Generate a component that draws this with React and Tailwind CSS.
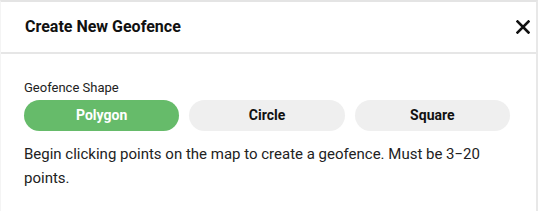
import React, { useState } from "react";

const shapes = ["Polygon", "Circle", "Square"];

export default function App() {
  const [shape, setShape] = useState("Polygon");

  return (
    <div className="w-[540px] h-[211px] bg-white font-['Roboto',sans-serif] text-[#1f1f1f]">
      <div className="w-[538px] h-full border-t-[2px] border-t-[#e4e4e4] border-r-[2px] border-r-[#e8e8e8] border-l border-l-[#f4f4f4]">
        <div className="h-[52px] flex items-center justify-between pl-6 pr-[1px] border-b-[2px] border-[#e6e6e6]">
          <span className="text-[16px] font-bold text-[#111]">Create New Geofence</span>
          <button className="w-6 h-6 flex items-center justify-center">
            <svg width="14" height="14" viewBox="0 0 14 14">
              <path d="M1.5 1.5L12.5 12.5M12.5 1.5L1.5 12.5" stroke="#111" strokeWidth="2.6" strokeLinecap="square" />
            </svg>
          </button>
        </div>
        <div className="pl-[23px] pr-[26px] pt-[25px]">
          <div className="text-[13px] leading-[17px] text-[#222]">Geofence Shape</div>
          <div className="mt-[4px] grid grid-cols-3 gap-[10px]">
            {shapes.map((s) => (
              <button
                key={s}
                onClick={() => setShape(s)}
                className={
                  s === shape
                    ? "h-[31px] rounded-full bg-[#66bb6a] text-white text-[14px] font-bold"
                    : "h-[31px] rounded-full bg-[#efefef] text-[#111] text-[14px] font-bold"
                }
              >
                {s}
              </button>
            ))}
          </div>
          <p className="mt-[11px] text-[15px] leading-[24px] text-[#222] pr-[20px]">
            Begin clicking points on the map to create a geofence. Must be 3−20 points.
          </p>
        </div>
      </div>
    </div>
  );
}
